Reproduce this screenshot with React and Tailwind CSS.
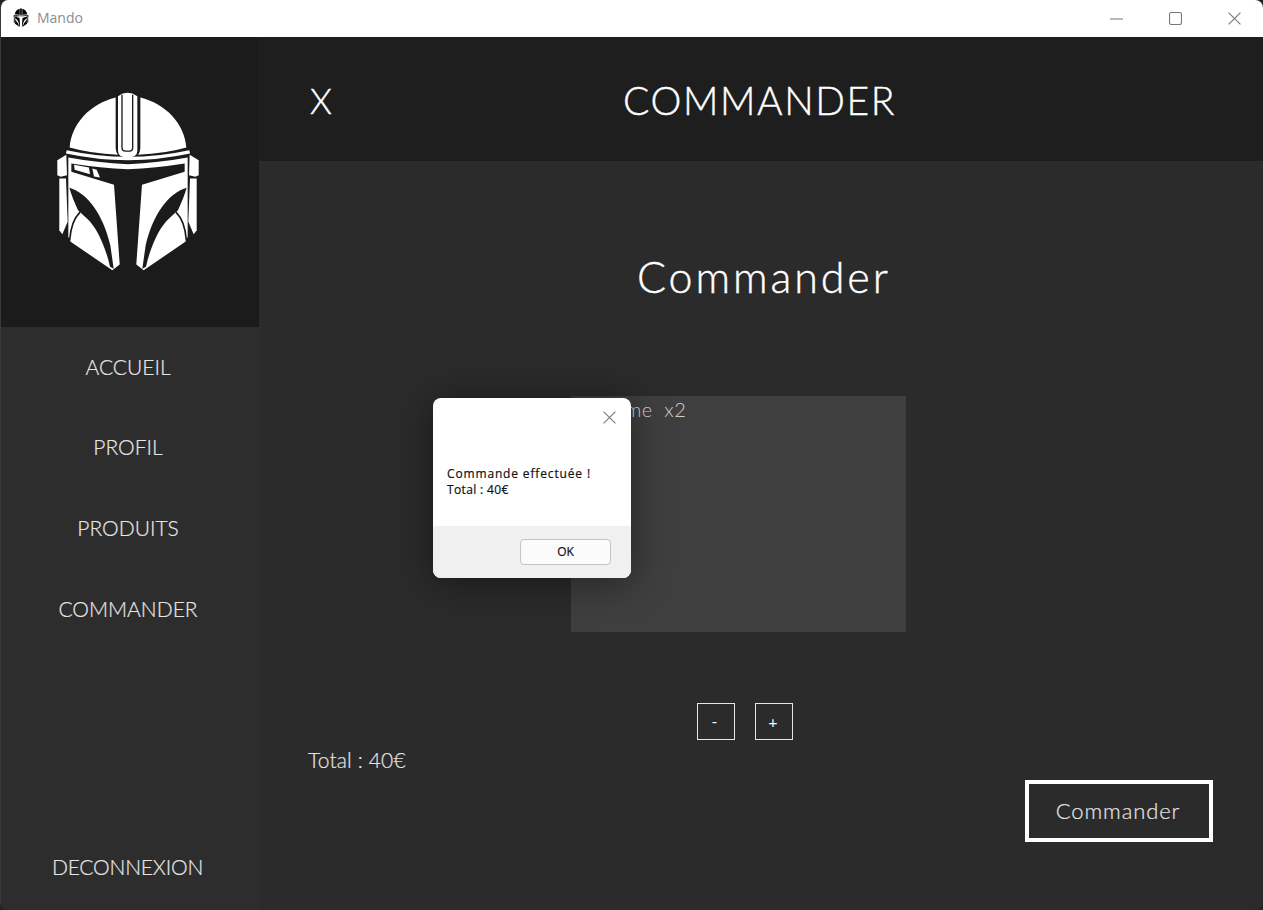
const navItems = [
  { label: 'ACCUEIL', cls: 'mt-[28px]' },
  { label: 'PROFIL', cls: 'mt-[56px]' },
  { label: 'PRODUITS', cls: 'mt-[57px]' },
  { label: 'COMMANDER', cls: 'mt-[57px]' },
]

function Helmet({ fg, bg, className }) {
  const half = (
    <>
      {/* dome */}
      <path d="M207 262C212 190 270 130 345 112L345 262Q346 278 352 284Q270 280 207 262Z" fill={fg} />
      {/* rim */}
      <path d="M197 275Q290 295 382 295" fill="none" stroke={fg} strokeWidth="10" />
      {/* ear */}
      <path d="M170 300L197 284L199 345L180 350L170 345Z" fill={fg} />
      <path d="M176 355L196 355L201 485L185 522L176 510Z" fill={fg} />
      {/* face */}
      <path d="M203 292Q290 308 382 312L382 330L358 612L335 630L210 545L203 530Z" fill={fg} />
      {/* visor + stem */}
      <path d="M212 310Q300 324 382 327L382 640L358 625L340 374L212 335Z" fill={bg} />
      {/* sweep */}
      <path d="M206 383C262 400 306 462 329 555L339 626L328 620C315 560 288 500 258 474C248 464 238 456 232 450C222 428 212 405 206 383Z" fill={bg} />
      <path d="M238 456C222 472 210 500 207 540" fill="none" stroke={bg} strokeWidth="5" />
    </>
  )
  return (
    <svg viewBox="160 90 444 545" className={className}>
      {half}
      <g transform="translate(764 0) scale(-1 1)">{half}</g>
      {/* crest */}
      <path d="M352 108Q380 88 410 108L410 272Q410 292 381 292Q352 292 352 272Z" fill={fg} />
      <path d="M364 104L364 262Q364 273 375 273L387 273Q396 273 396 262L396 104" fill="none" stroke={bg} strokeWidth="4" />
      {/* visor windows */}
      <path d="M220 314L265 322L268 342L222 329Z" fill={fg} />
      <path d="M275 325L288 329L298 352L280 349Z" fill={fg} />
    </svg>
  )
}

export default function App() {
  return (
    <div className="relative w-[1263px] h-[910px] bg-[#222222] overflow-hidden font-['Lato',sans-serif] font-light">
      <div className="h-[910px] flex flex-col rounded-lg overflow-hidden border-l border-[#3a3a3a]">
        {/* title bar */}
        <div className="h-[37px] bg-white flex items-center shrink-0 pl-[12px]">
          <Helmet fg="#000000" bg="#ffffff" className="w-[16px] h-[19px] -mt-[2px]" />
          <span className="ml-[8px] -mt-[2px] text-[14px] font-normal text-[#8c8c8c] font-['Open_Sans',sans-serif]">Mando</span>
          <div className="ml-auto flex items-center text-[#777777]">
            <svg viewBox="0 0 12 12" className="w-[13px] h-[13px] mr-[46px]"><path d="M0 6.5H12" stroke="currentColor" fill="none" /></svg>
            <svg viewBox="0 0 12 12" className="w-[13px] h-[13px] mr-[46px]"><rect x="0.5" y="0.5" width="11" height="11" rx="1.5" stroke="currentColor" fill="none" /></svg>
            <svg viewBox="0 0 12 12" className="w-[13px] h-[13px] mr-[22px]"><path d="M0.5 0.5L11.5 11.5M11.5 0.5L0.5 11.5" stroke="currentColor" fill="none" /></svg>
          </div>
        </div>

        <div className="flex flex-1 min-h-0">
          {/* sidebar */}
          <aside className="w-[258px] shrink-0 flex flex-col bg-[#2d2d2d] [-webkit-text-stroke:0.2px_#e6e6e6]">
            <div className="h-[290px] bg-[#1b1b1b] flex justify-center pt-[53px] pr-[5px]">
              <Helmet fg="#ffffff" bg="#1b1b1b" className="w-[148px] h-[182px]" />
            </div>
            {navItems.map((item) => (
              <div key={item.label} className={`${item.cls} pr-[4px] text-center text-[21px] leading-[24px] text-[#e6e6e6]`}>
                {item.label}
              </div>
            ))}
            <div className="mt-auto mb-[31px] pr-[5px] text-center text-[21px] tracking-[-0.2px] leading-[24px] text-[#e6e6e6]">DECONNEXION</div>
          </aside>

          {/* main */}
          <main className="flex-1 flex flex-col bg-[#2b2b2b] min-w-0">
            <header className="h-[124px] shrink-0 bg-[#1e1e1e] flex items-center relative [-webkit-text-stroke:0.4px_white]">
              <span className="ml-[51px] mt-[2px] text-[35px] text-white">X</span>
              <h1 className="absolute left-[364px] top-[40px] leading-[47px] text-[39px] tracking-[1.6px] text-white">COMMANDER</h1>
            </header>

            <div className="flex-1 flex flex-col px-[50px]">
              <h2 className="mt-[90px] ml-[328px] text-[43px] leading-[52px] tracking-[2.9px] text-white [-webkit-text-stroke:0.4px_white]">Commander</h2>

              <div className="mt-[93px] ml-[262px] w-[335px] h-[236px] bg-[#3f3f3f] text-[20px] leading-[26px] tracking-[0.4px] text-[#cfcfcf] pl-[12px] whitespace-pre">
                Légume  x2
              </div>

              <div className="mt-[71px] ml-[388px] flex gap-[20px]">
                <button className="w-[38px] h-[37px] pr-[3px] pb-[1px] border border-[#e6e6e6] text-white text-[16px] font-normal">-</button>
                <button className="w-[38px] h-[37px] pr-[2px] border border-[#e6e6e6] text-white text-[16px] font-normal">+</button>
              </div>

              <div className="mt-[6px] -ml-[1px] text-[21px] leading-[28px] tracking-[0.15px] text-[#e4e4e4] [-webkit-text-stroke:0.2px_#e4e4e4]">Total : 40€</div>

              <button className="mt-[6px] self-end w-[188px] h-[62px] pb-[2px] pr-[2px] border-4 border-white text-[22px] tracking-[0.9px] text-[#e4e4e4] [-webkit-text-stroke:0.2px_#e4e4e4]">
                Commander
              </button>
            </div>
          </main>
        </div>
      </div>

      {/* message box */}
      <div className="absolute left-[433px] top-[398px] w-[198px] h-[180px] rounded-lg overflow-hidden bg-white shadow-[0_4px_40px_rgba(0,0,0,0.45)] flex flex-col font-['Open_Sans',sans-serif]">
        <div className="flex-1 relative pl-[14px] pt-[68px] text-[12px] leading-[16px] tracking-[0.85px] text-[#111111] font-medium [-webkit-text-stroke:0.2px_#111111]">
          <svg viewBox="0 0 12 12" className="absolute right-[15px] top-[13px] w-[13px] h-[13px] text-[#777777]"><path d="M0.5 0.5L11.5 11.5M11.5 0.5L0.5 11.5" stroke="currentColor" fill="none" /></svg>
          <p>Commande effectuée !</p>
          <p className="tracking-[0.35px]">Total : 40€</p>
        </div>
        <div className="h-[52px] bg-[#f0f0f0] flex items-center justify-end pr-[20px]">
          <button className="w-[91px] h-[26px] rounded-[4px] bg-[#fbfbfb] border border-[#c4c4c4] text-[12px] font-medium text-[#111111] [-webkit-text-stroke:0.2px_#111111]">OK</button>
        </div>
      </div>
    </div>
  )
}
